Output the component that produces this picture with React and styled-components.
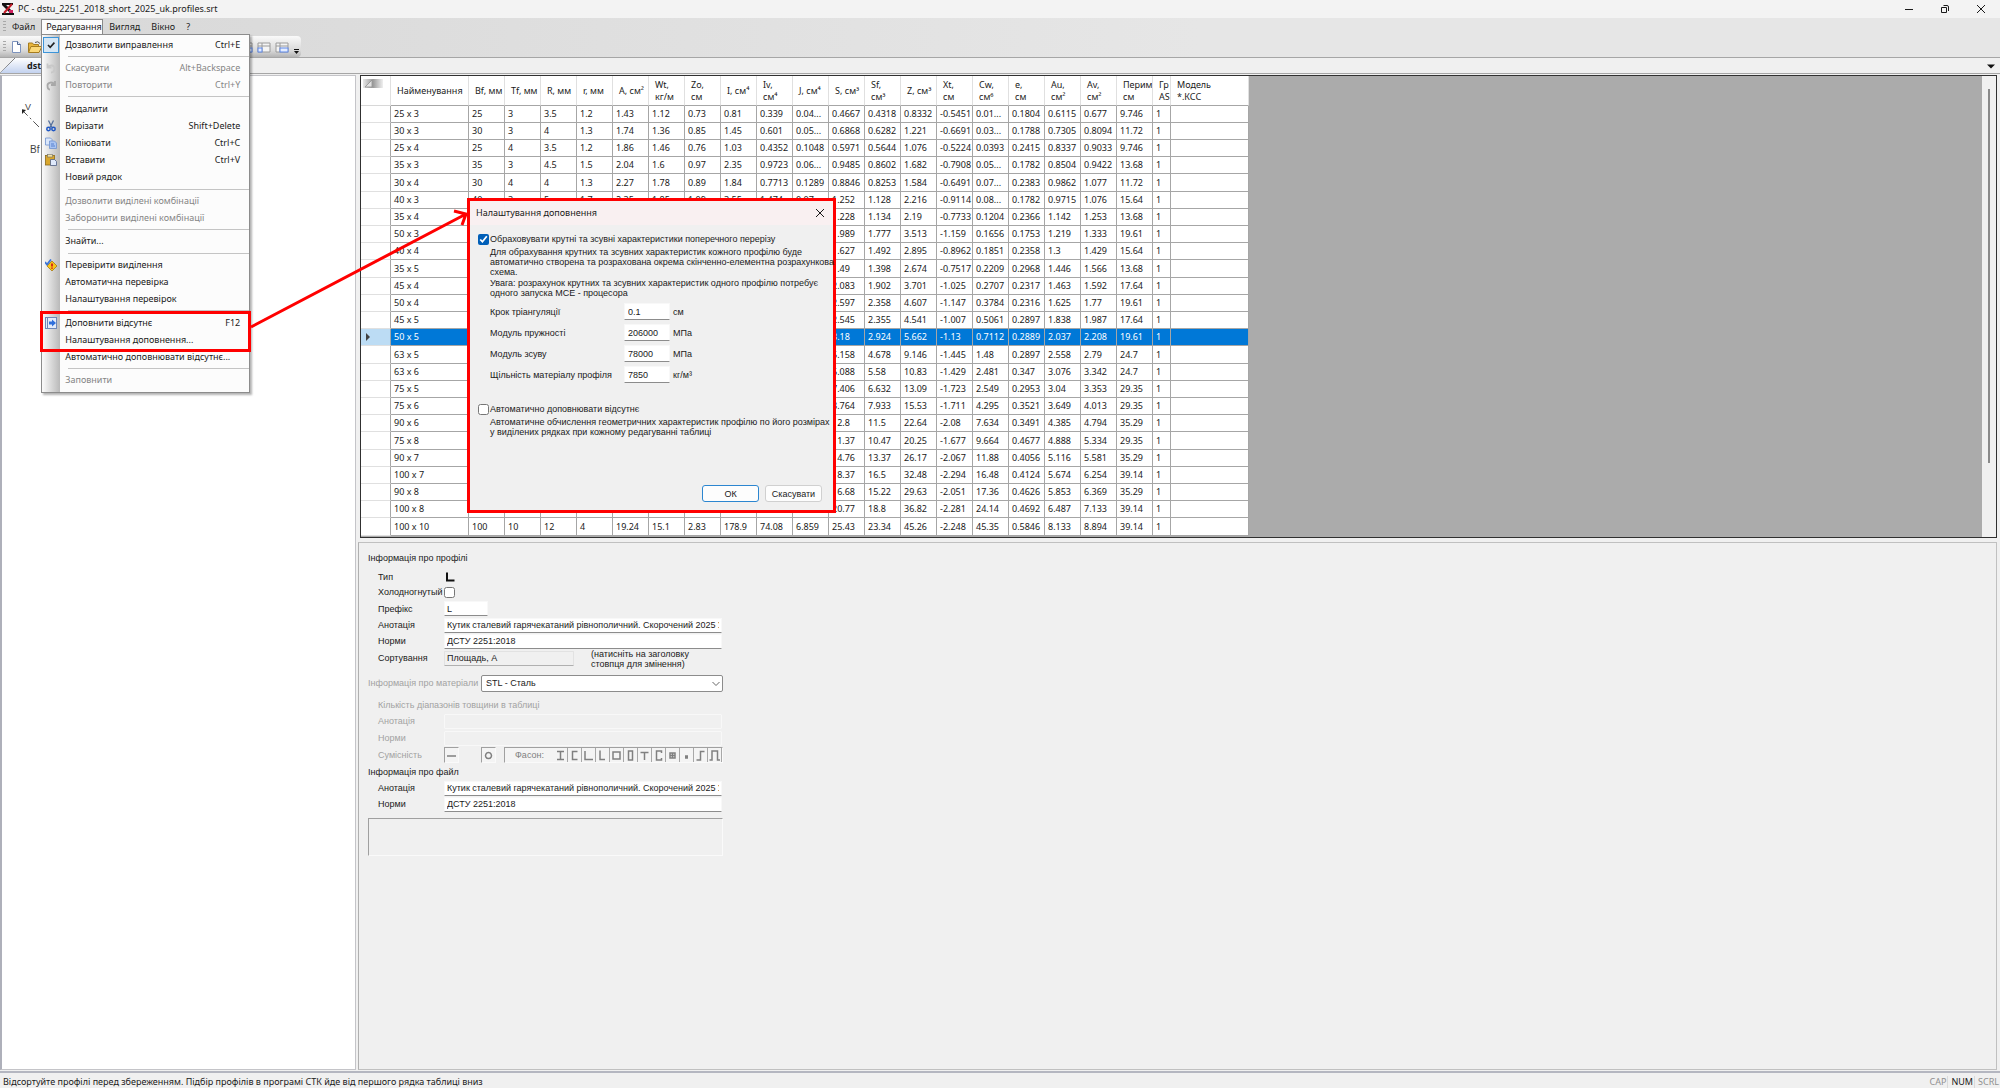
import React from 'react';
import styled, { createGlobalStyle, css } from 'styled-components';

const Global = createGlobalStyle`
  *, *::before, *::after { box-sizing: border-box; }
  body { margin: 0; background: #f0f0f0; }
  body, table {
    font-family: "Noto Sans", "Open Sans", sans-serif;
    font-size: 9px;
    line-height: 12px;
    color: #1a1a1a;
  }
  button, input, select {
    font: inherit;
    color: #1a1a1a;
  }
`;

const Window = styled.div`
  position: relative;
  display: flex;
  flex-direction: column;
  min-height: 100vh;
  background: #f0f0f0;
`;

/* ---------- title bar ---------- */
const TitleBar = styled.header`
  display: flex;
  align-items: center;
  height: 18px;
  padding: 0 14px 0 2px;
  gap: 4px;
  background: #f3f3f3;
`;
const Title = styled.h1`
  flex: 1;
  margin: 0;
  font-size: 9px;
  font-weight: 400;
`;
const WindowButtons = styled.div`
  display: flex;
  gap: 26px;
`;
const GlyphButton = styled.button`
  display: flex;
  width: 10px;
  height: 10px;
  padding: 0;
  border: 0;
  background: none;
`;

/* ---------- menu bar ---------- */
const MenuBar = styled.nav`
  display: flex;
  align-items: center;
  height: 18px;
  padding-left: 3px;
  gap: 1px;
  background: linear-gradient(90deg, #d8d8d8, #e6e6e6 60%);
`;
const Grip = styled.span`
  width: 3px;
  height: 12px;
  background: repeating-linear-gradient(#a8a8a8 0 1px, transparent 1px 3px);
`;
const MenuSlot = styled.div`
  position: relative;
`;
const MenuTitle = styled.button`
  height: 16px;
  padding: 0 4px;
  white-space: nowrap;
  border: 1px solid transparent;
  background: none;
  ${(p) => p.$open && css`
    width: 62px;
    border-color: #8a8a8a;
    border-bottom-color: #fcfcfc;
    background: #fcfcfc;
  `}
`;
const Menu = styled.ul`
  position: absolute;
  z-index: 5;
  top: 15px;
  left: 0;
  width: 209px;
  margin: 0;
  padding: 1px 0 3px 1px;
  list-style: none;
  border: 1px solid #8c8c8c;
  background: linear-gradient(90deg, #f8f8f8 1px, #b9b9b9 18px, #fcfcfc 18px);
  box-shadow: 2px 2px 2px rgba(0, 0, 0, 0.3);
`;
const MenuRow = styled.li`
  height: 17px;
  &:nth-child(5n) { height: 18px; }
`;
const MenuItem = styled.button`
  display: grid;
  grid-template-columns: 17px 1fr auto;
  align-items: center;
  width: 100%;
  height: 100%;
  padding: 0 9px 0 0;
  border: 0;
  background: none;
  text-align: left;
  white-space: nowrap;
  &:disabled { color: #858585; }
`;
const MenuIcon = styled.span`
  display: flex;
  align-items: center;
  justify-content: center;
  width: 16px;
  height: 16px;
  ${(p) => p.$on && css`
    border: 1px solid #3c94d8;
    background: #d5e6f4;
  `}
`;
const MenuText = styled.span`
  padding-left: 5px;
`;
const MenuLine = styled.li`
  height: 6px;
  padding-top: 3px;
  &:nth-child(5n) { height: 7px; }
  &::before {
    content: "";
    display: block;
    height: 1px;
    margin-left: 25px;
    background: #c4c4c4;
  }
`;

/* ---------- tool bar ---------- */
const ToolBand = styled.div`
  height: 21px;
  background: linear-gradient(90deg, #d8d8d8, #e6e6e6 60%);
`;
const ToolBar = styled.div`
  display: flex;
  align-items: center;
  width: 301px;
  height: 21px;
  padding-left: 3px;
  gap: 4px;
  border-radius: 0 4px 4px 0;
  background: linear-gradient(#fafafa, #d8d8d8 70%, #b4b4b4);
`;
const ToolButton = styled.button`
  display: flex;
  width: ${(p) => (p.$thin ? 8 : 14)}px;
  height: 14px;
  padding: 0;
  border: 0;
  background: none;
`;
const ToolSpace = styled.span`
  flex: 1;
`;

/* ---------- document tabs ---------- */
const TabStrip = styled.div`
  display: flex;
  align-items: center;
  justify-content: space-between;
  height: 17px;
  padding-right: 4px;
  border-top: 1px solid #a6a6a6;
  border-bottom: 1px solid #a6a6a6;
`;
const Tab = styled.button`
  width: 130px;
  height: 15px;
  padding: 0 0 0 27px;
  border: 0;
  text-align: left;
  font-weight: 700;
  background: linear-gradient(to bottom right, transparent 49%, #808080 50%, transparent 51%) 0 0 / 15px 15px no-repeat,
    linear-gradient(#ffffff, #c3d2ef);
  clip-path: polygon(14px 0, 100% 0, 100% 100%, 0 100%);
`;

/* ---------- body ---------- */
const Workspace = styled.main`
  flex: 1;
  display: flex;
  gap: 2px;
  padding: 1px 3px 1px 0;
  border-bottom: 2px solid #b4b6c0;
`;
const Preview = styled.section`
  width: 356px;
  padding: 26px 0 0 20px;
  border: 1px solid #c4c4c8;
  border-left: 2px solid #aeb0ba;
  background: #fff;
`;
const RightSide = styled.div`
  flex: 1;
  display: flex;
  flex-direction: column;
  min-width: 0;
  gap: 4px;
`;
const GridPane = styled.section`
  display: flex;
  height: 463px;
  margin-left: 2px;
  overflow: hidden;
  border: 1px solid #303030;
  background: #ababab;
`;
const GridArea = styled.div`
  flex: 1;
  overflow: hidden;
`;
const Scroller = styled.div`
  display: flex;
  justify-content: center;
  width: 14px;
  padding: 13px 0;
  background: #f0f0f0;
`;
const Thumb = styled.div`
  width: 2px;
  height: 86%;
  background: #8a8a8a;
`;
const Grid = styled.table`
  width: 888px;
  table-layout: fixed;
  border-collapse: separate;
  border-spacing: 0;
  background: #fff;
`;
const Col = styled.col`
  width: ${(p) => p.$w}px;
`;
const Head = styled.th`
  height: 30px;
  padding: 0 0 0 6px;
  overflow: hidden;
  text-align: left;
  font-weight: 400;
  white-space: pre;
  border-right: 1px solid #e0e0e0;
  border-bottom: 1px solid #a6a6a6;
`;
const Corner = styled.th`
  padding: 3px 0 0 2px;
  vertical-align: top;
  text-align: left;
  line-height: 0;
  border-right: 1px solid #e0e0e0;
  border-bottom: 1px solid #d8d8d8;
`;
const Row = styled.tr`
  height: 17px;
  &:nth-child(5n) { height: 18px; }
  ${(p) => p.$active && css`
    td { color: #fff; background: #0078d7; }
    th { background: #bcdcf4; }
  `}
`;
const RowHead = styled.th`
  padding: 0 0 0 4px;
  text-align: left;
  line-height: 0;
  border-right: 1px solid #a6a6a6;
  border-bottom: 1px solid #e0e0e0;
`;
const Cell = styled.td`
  padding: 0 0 0 3px;
  overflow: hidden;
  white-space: nowrap;
  border-right: 1px solid #a6a6a6;
  border-bottom: 1px solid #a6a6a6;
`;

/* ---------- form ---------- */
const FormPane = styled.section`
  flex: 1;
  padding: 9px 0 0 9px;
  border: 1px solid #c0c0c0;
  border-left-color: #b0b0b0;
  font-family: "Liberation Sans", Arial, sans-serif;
`;
const Form = styled.form`
  width: 355px;
`;
const Heading = styled.h2`
  margin: 0;
  height: ${(p) => (p.$first ? 18 : 14)}px;
  font-size: 9px;
  font-weight: 400;
`;
const Line = styled.div`
  display: flex;
  align-items: center;
  height: ${(p) => p.$h || 16}px;
  padding-left: ${(p) => (p.$flush ? 0 : 10)}px;
  white-space: nowrap;
  color: ${(p) => (p.$off ? '#a2a2a2' : '#1a1a1a')};
`;
const Name = styled.label`
  width: ${(p) => p.$w || 66}px;
`;
const Box = styled.input`
  width: ${(p) => p.$w || 278}px;
  height: 15px;
  padding: 0 2px;
  border: 1px solid #f8f8f8;
  border-bottom-color: #8c8c8c;
  border-radius: 1px;
  background: #fff;
  &:disabled { border-color: #f8f8f8; background: #f0f0f0; }
  &:read-only:enabled { border-color: #e2e2e2; border-bottom-color: #b0b0b0; background: #f0f0f0; }
`;
const Tick = styled.input`
  width: 11px;
  height: 11px;
  margin: 0;
  accent-color: #005fb8;
`;
const Hint = styled.span`
  padding: 2px 0 0 17px;
  white-space: pre;
  line-height: 10px;
`;
const PickWrap = styled.span`
  position: relative;
  flex: 1;
  height: 17px;
  svg { position: absolute; right: 3px; top: 6px; }
`;
const Pick = styled.select`
  width: 100%;
  height: 17px;
  padding: 0 4px;
  appearance: none;
  border: 1px solid #8c8c8c;
  border-radius: 2px;
  background: #fff;
`;
const ShapeBar = styled.div`
  display: flex;
  height: 16px;
  margin-left: ${(p) => p.$gap || 0}px;
  border: 1px solid #fafafa;
  border-top-color: #a0a0a0;
  border-left-color: #a0a0a0;
`;
const ShapeButton = styled.button`
  display: flex;
  align-items: center;
  justify-content: center;
  width: ${(p) => p.$w || 14}px;
  height: 14px;
  padding: 0;
  color: #808080;
  border: 0;
  border-right: ${(p) => (p.$w ? 0 : 1)}px solid #a8a8a8;
  background: #f4f4f4;
`;
const Notes = styled.div`
  height: 38px;
  margin-top: 6px;
  border: 1px solid #fafafa;
  border-top-color: #a0a0a0;
  border-left-color: #a0a0a0;
`;

/* ---------- status bar ---------- */
const StatusBar = styled.footer`
  display: flex;
  align-items: center;
  justify-content: space-between;
  height: 15px;
  padding: 2px 1px 0 3px;
`;
const Locks = styled.div`
  display: flex;
`;
const Lock = styled.span`
  padding: 0 1px 0 3px;
  color: ${(p) => (p.$on ? '#1a1a1a' : '#8f8f8f')};
  border-right: 1px solid #dadada;
  &:last-child { padding-right: 0; border-right: 0; }
`;

/* ---------- dialog and call-outs ---------- */
const Dialog = styled.section`
  position: absolute;
  z-index: 6;
  top: 198px;
  left: 467px;
  width: 369px;
  height: 315px;
  display: flex;
  flex-direction: column;
  border: 3px solid #ff0000;
  background: #f0f0f0;
`;
const DialogTitle = styled.div`
  display: flex;
  align-items: center;
  justify-content: space-between;
  height: 24px;
  padding: 0 8px 0 6px;
  background: #f9f0f1;
`;
const DialogBody = styled.div`
  flex: 1;
  display: flex;
  flex-direction: column;
  padding: 7px 11px 8px 8px;
  font-family: "Liberation Sans", Arial, sans-serif;
`;
const TickLine = styled.label`
  display: flex;
  align-items: center;
  gap: 1px;
  height: 14px;
  margin-top: ${(p) => p.$gap || 0}px;
  white-space: nowrap;
`;
const Note = styled.p`
  margin: 0;
  padding: 1px 0 0 12px;
  line-height: 10px;
  white-space: pre;
`;
const Fields = styled.div`
  display: grid;
  grid-template-columns: 134px 46px auto;
  grid-auto-rows: 17px;
  row-gap: 4px;
  column-gap: 0;
  align-items: center;
  padding: 5px 0 0 12px;
`;
const Value = styled.input`
  height: 17px;
  padding: 0 3px;
  border: 1px solid #f8f8f8;
  border-bottom-color: #8c8c8c;
  border-radius: 1px;
  background: #fff;
`;
const Unit = styled.span`
  padding-left: 3px;
`;
const Actions = styled.div`
  display: flex;
  justify-content: flex-end;
  gap: 6px;
  margin-top: auto;
`;
const Action = styled.button`
  width: 57px;
  height: 17px;
  padding: 0;
  border: 1px solid ${(p) => (p.$main ? '#2c86d0' : '#d0d0d0')};
  border-radius: 3px;
  background: #fdfdfd;
`;
const Highlight = styled.div`
  position: absolute;
  z-index: 7;
  top: 311px;
  left: 40px;
  width: 211px;
  height: 41px;
  border: 3px solid #ff0000;
`;
const Arrow = styled.svg`
  position: absolute;
  z-index: 7;
  top: 205px;
  left: 248px;
`;

/* ---------- data ---------- */
const heads = ['Найменування', 'Bf, мм', 'Tf, мм', 'R, мм', 'r, мм', 'A, см²', 'Wt,\nкг/м', 'Zo,\nсм', 'I, см⁴', 'Iv,\nсм⁴', 'J, см⁴', 'S, см³', 'Sf,\nсм³', 'Z, см³', 'Xt,\nсм', 'Cw,\nсм⁶', 'e,\nсм', 'Au,\nсм²', 'Av,\nсм²', 'Перим\nсм', 'Гр\nAS', 'Модель\n*.КСС'];
const widths = [30, 78, ...Array(19).fill(36), 18, 78];

const rows = `25 x 3|25|3|3.5|1.2|1.43|1.12|0.73|0.81|0.339|0.04...|0.4667|0.4318|0.8332|-0.5451|0.01...|0.1804|0.6115|0.677|9.746
30 x 3|30|3|4|1.3|1.74|1.36|0.85|1.45|0.601|0.05...|0.6868|0.6282|1.221|-0.6691|0.03...|0.1788|0.7305|0.8094|11.72
25 x 4|25|4|3.5|1.2|1.86|1.46|0.76|1.03|0.4352|0.1048|0.5971|0.5644|1.076|-0.5224|0.0393|0.2415|0.8337|0.9033|9.746
35 x 3|35|3|4.5|1.5|2.04|1.6|0.97|2.35|0.9723|0.06...|0.9485|0.8602|1.682|-0.7908|0.05...|0.1782|0.8504|0.9422|13.68
30 x 4|30|4|4|1.3|2.27|1.78|0.89|1.84|0.7713|0.1289|0.8846|0.8253|1.584|-0.6491|0.07...|0.2383|0.9862|1.077|11.72
40 x 3|40|3|5|1.7|2.35|1.85|1.09|3.55|1.474|0.07...|1.252|1.128|2.216|-0.9114|0.08...|0.1782|0.9715|1.076|15.64
35 x 4|||||||||||1.228|1.134|2.19|-0.7733|0.1204|0.2366|1.142|1.253|13.68
50 x 3|||||||||||1.989|1.777|3.513|-1.159|0.1656|0.1753|1.219|1.333|19.61
40 x 4|||||||||||1.627|1.492|2.895|-0.8962|0.1851|0.2358|1.3|1.429|15.64
35 x 5|||||||||||1.49|1.398|2.674|-0.7517|0.2209|0.2968|1.446|1.566|13.68
45 x 4|||||||||||2.083|1.902|3.701|-1.025|0.2707|0.2317|1.463|1.592|17.64
50 x 4|||||||||||2.597|2.358|4.607|-1.147|0.3784|0.2316|1.625|1.77|19.61
45 x 5|||||||||||2.545|2.355|4.541|-1.007|0.5061|0.2897|1.838|1.987|17.64
50 x 5|||||||||||3.18|2.924|5.662|-1.13|0.7112|0.2889|2.037|2.208|19.61
63 x 5|||||||||||5.158|4.678|9.146|-1.445|1.48|0.2897|2.558|2.79|24.7
63 x 6|||||||||||6.088|5.58|10.83|-1.429|2.481|0.347|3.076|3.342|24.7
75 x 5|||||||||||7.406|6.632|13.09|-1.723|2.549|0.2953|3.04|3.353|29.35
75 x 6|||||||||||8.764|7.933|15.53|-1.711|4.295|0.3521|3.649|4.013|29.35
90 x 6|||||||||||12.8|11.5|22.64|-2.08|7.634|0.3491|4.385|4.794|35.29
75 x 8|||||||||||11.37|10.47|20.25|-1.677|9.664|0.4677|4.888|5.334|29.35
90 x 7|||||||||||14.76|13.37|26.17|-2.067|11.88|0.4056|5.116|5.581|35.29
100 x 7|||||||||||18.37|16.5|32.48|-2.294|16.48|0.4124|5.674|6.254|39.14
90 x 8|||||||||||16.68|15.22|29.63|-2.051|17.36|0.4626|5.853|6.369|35.29
100 x 8|||||||||||20.77|18.8|36.82|-2.281|24.14|0.4692|6.487|7.133|39.14
100 x 10|100|10|12|4|19.24|15.1|2.83|178.9|74.08|6.859|25.43|23.34|45.26|-2.248|45.35|0.5846|8.133|8.894|39.14`
  .split('\n')
  .map((line) => [...line.split('|'), '1', '']);

const menuItems = [
  { text: 'Дозволити виправлення', keys: 'Ctrl+E', icon: 'check', on: true },
  null,
  { text: 'Скасувати', keys: 'Alt+Backspace', icon: 'undo', off: true },
  { text: 'Повторити', keys: 'Ctrl+Y', icon: 'redo', off: true },
  null,
  { text: 'Видалити' },
  { text: 'Вирізати', keys: 'Shift+Delete', icon: 'cut' },
  { text: 'Копіювати', keys: 'Ctrl+C', icon: 'copy' },
  { text: 'Вставити', keys: 'Ctrl+V', icon: 'paste' },
  { text: 'Новий рядок' },
  null,
  { text: 'Дозволити виділені комбінації', off: true },
  { text: 'Заборонити виділені комбінації', off: true },
  null,
  { text: 'Знайти...' },
  null,
  { text: 'Перевірити виділення', icon: 'verify' },
  { text: 'Автоматична перевірка' },
  { text: 'Налаштування перевірок' },
  null,
  { text: 'Доповнити відсутнє', keys: 'F12', icon: 'fill' },
  { text: 'Налаштування доповнення...' },
  { text: 'Автоматично доповнювати відсутнє...' },
  null,
  { text: 'Заповнити', off: true },
];

const iconArt = {
  check: <path d="M3 6l2.2 2.4L9.4 3.6" fill="none" stroke="#222" strokeWidth="1.6" />,
  undo: <path d="M2.5 1.5v4h4M3 5C5 2.5 9.5 3 9.5 6.5S7.5 10.5 6 10.5" fill="none" stroke="#c8c8c8" strokeWidth="1.8" />,
  redo: <path d="M10 2v4H6M9.5 5.5C7.5 2.5 2.5 3 2.5 6.5S4 10.5 5 10.5" fill="none" stroke="#a8a8a8" strokeWidth="1.8" />,
  cut: (
    <g fill="none">
      <path d="M3.5 0.5L7 7.5M8.5 0.5L5 7.5" stroke="#55709c" strokeWidth="1.3" />
      <circle cx="3.5" cy="9" r="1.7" stroke="#1f57c4" strokeWidth="1.5" />
      <circle cx="8.5" cy="9" r="1.7" stroke="#1f57c4" strokeWidth="1.5" />
    </g>
  ),
  copy: (
    <g stroke="#6f92cf" strokeWidth="0.8">
      <path d="M0.5 1h5l1.5 1.5V8H0.5z" fill="#dbe7fa" />
      <path d="M4.5 4h5l2 2v5.5h-7z" fill="#a9c4f2" />
      <path d="M6 7h3M6 9h4" stroke="#3f6fc8" />
    </g>
  ),
  paste: (
    <g>
      <rect x="0.5" y="1.5" width="9" height="9.5" fill="#d9a62c" stroke="#8a6a1c" strokeWidth="0.8" />
      <rect x="2.5" y="0.5" width="5" height="2.5" fill="#f4e3a1" stroke="#6d6d6d" strokeWidth="0.6" />
      <path d="M5.5 5.5h4l2 2v4h-6z" fill="#dfe9fb" stroke="#4f5f86" strokeWidth="0.8" />
    </g>
  ),
  verify: (
    <g>
      <path d="M7 2l5 5-5 5-5-5z" fill="#f7c51c" stroke="#a77a10" strokeWidth="0.8" />
      <path d="M7 4.5v3M7 8.5v1.2" stroke="#d01616" strokeWidth="1.7" />
      <path d="M0 3l2 2.5L6 0.5" fill="none" stroke="#3b74d6" strokeWidth="1.8" />
    </g>
  ),
  fill: (
    <g>
      <rect x="0.5" y="0.5" width="11" height="11" fill="#e3ecfa" stroke="#6d87b8" />
      <path d="M2.5 1v10" stroke="#6d87b8" />
      <path d="M4 4.5h3v-2l4 3.5-4 3.5v-2H4z" fill="#2f6fdb" />
    </g>
  ),
};

const shapes = [
  'M2 1.5h7M2 9.5h7M5.5 1.5v8',
  'M8.5 1.5H3.5v8h5',
  'M2 1v8.5h8',
  'M3 0.5v9h5',
  'M2 2h7v7H2z',
  'M3.5 1h4v9h-4z',
  'M1.5 2.5h8M5.5 2.5v7.5',
  'M8.5 3V1H3.5v9h5V8',
  'M3 3h5v5H3zM3 5.5h5M5.5 3v5',
  'M4 6h3M4 7h3M4 8h3',
  'M1.5 10h4V1.5h4',
  'M0.5 10h2.5V1h5.5v9h2.5',
];

const Art = ({ d, size = 11, width = 1.5 }) => (
  <svg width={size} height={size} viewBox={`0 0 ${size} ${size}`} aria-hidden="true">
    <path d={d} fill="none" stroke="currentColor" strokeWidth={width} />
  </svg>
);

const TableGlyph = ({ x, w }) => (
  <svg width="14" height="14" viewBox="0 0 14 14" aria-hidden="true">
    <path d="M1 3h12v9H1zM1 6h12M5 3v9" fill="#f4f4f4" stroke="#9a9a9a" />
    <rect x={x} y="8" width={w} height="4" fill="#e4edff" stroke="#5c86e6" />
  </svg>
);

const fields = [
  ['step', 'Крок тріангуляції', '0.1', 'см'],
  ['young', 'Модуль пружності', '206000', 'МПа'],
  ['shear', 'Модуль зсуву', '78000', 'МПа'],
  ['density', 'Щільність матеріалу профіля', '7850', 'кг/м³'],
];

const annotation = 'Кутик сталевий гарячекатаний рівнополичний. Скорочений 2025 Україна';

function EditMenu() {
  return (
    <Menu>
      {menuItems.map((item, i) =>
        item ? (
          <MenuRow key={i}>
            <MenuItem type="button" disabled={item.off}>
              <MenuIcon $on={item.on}>
                {item.icon && <svg width="12" height="12" viewBox="0 0 12 12" aria-hidden="true">{iconArt[item.icon]}</svg>}
              </MenuIcon>
              <MenuText>{item.text}</MenuText>
              <span>{item.keys}</span>
            </MenuItem>
          </MenuRow>
        ) : (
          <MenuLine key={i} />
        )
      )}
    </Menu>
  );
}

function ProfileGrid() {
  return (
    <GridPane>
      <GridArea>
        <Grid>
          <colgroup>
            {widths.map((w, i) => <Col key={i} $w={w} />)}
          </colgroup>
          <thead>
            <tr>
              <Corner>
                <svg width="20" height="10" viewBox="0 0 20 10" aria-hidden="true">
                  <defs>
                    <linearGradient id="corner">
                      <stop offset="0" stopColor="#e8e8e8" />
                      <stop offset="0.5" stopColor="#9a9a9a" />
                      <stop offset="1" stopColor="#f0f0f0" />
                    </linearGradient>
                  </defs>
                  <rect width="20" height="9" fill="url(#corner)" />
                  <path d="M2 8L9 1v7z" fill="#e0e0e0" stroke="#909090" strokeWidth="0.8" />
                </svg>
              </Corner>
              {heads.map((h) => <Head key={h}>{h}</Head>)}
            </tr>
          </thead>
          <tbody>
            {rows.map((cells) => {
              const active = cells[0] === '50 x 5';
              return (
                <Row key={cells[0]} $active={active}>
                  <RowHead>
                    {active && <svg width="5" height="8" viewBox="0 0 5 8" aria-hidden="true"><path d="M1 0l4 4-4 4z" fill="#404040" /></svg>}
                  </RowHead>
                  {cells.map((c, i) => <Cell key={i}>{c}</Cell>)}
                </Row>
              );
            })}
          </tbody>
        </Grid>
      </GridArea>
      <Scroller><Thumb /></Scroller>
    </GridPane>
  );
}

function ProfileForm() {
  return (
    <FormPane>
      <Form>
        <Heading $first>Інформація про профілі</Heading>
        <Line $h={14}>
          <Name as="span">Тип</Name>
          <svg width="11" height="11" viewBox="0 0 11 11" aria-hidden="true"><path d="M3 0.5v8h7.5" fill="none" stroke="#111" strokeWidth="2" /></svg>
        </Line>
        <Line>
          <Name htmlFor="cold">Холодногнутый</Name>
          <Tick id="cold" type="checkbox" />
        </Line>
        <Line $h={17}>
          <Name htmlFor="prefix">Префікс</Name>
          <Box id="prefix" $w={44} defaultValue="L" />
        </Line>
        <Line>
          <Name htmlFor="note">Анотація</Name>
          <Box id="note" defaultValue={annotation} />
        </Line>
        <Line>
          <Name htmlFor="norm">Норми</Name>
          <Box id="norm" defaultValue="ДСТУ 2251:2018" />
        </Line>
        <Line $h={18}>
          <Name htmlFor="sort">Сортування</Name>
          <Box id="sort" $w={130} readOnly value="Площадь, A" />
          <Hint>{'(натисніть на заголовку\nстовпця для змінення)'}</Hint>
        </Line>
        <Line $h={32} $flush $off>
          <Name htmlFor="material" $w={113}>Інформація про матеріали</Name>
          <PickWrap>
            <Pick id="material" defaultValue="stl">
              <option value="stl">STL - Сталь</option>
            </Pick>
            <svg width="8" height="6" viewBox="0 0 8 6" aria-hidden="true"><path d="M0.5 1L4 4.500L7.500 1" fill="none" stroke="#666" /></svg>
          </PickWrap>
        </Line>
        <Line $h={11} $off>Кількість діапазонів товщини в таблиці</Line>
        <Line $h={22} $off>
          <Name htmlFor="matnote">Анотація</Name>
          <Box id="matnote" disabled />
        </Line>
        <Line $h={12} $off>
          <Name htmlFor="matnorm">Норми</Name>
          <Box id="matnorm" disabled />
        </Line>
        <Line $h={22} $off>
          <Name as="span">Сумісність</Name>
          <ShapeBar><ShapeButton type="button" $w={13} aria-label="Лист"><Art d="M1 6h9" /></ShapeButton></ShapeBar>
          <ShapeBar $gap={22}><ShapeButton type="button" $w={13} aria-label="Труба"><Art d="M5.5 2.5a3 3 0 1 0 0.01 0z" /></ShapeButton></ShapeBar>
          <ShapeBar $gap={8}>
            <ShapeButton type="button" $w={49}>Фасон:</ShapeButton>
            {shapes.map((d, i) => <ShapeButton key={i} type="button" aria-label={`Фасон ${i + 1}`}><Art d={d} /></ShapeButton>)}
          </ShapeBar>
        </Line>
        <Heading>Інформація про файл</Heading>
        <Line>
          <Name htmlFor="filenote">Анотація</Name>
          <Box id="filenote" defaultValue={annotation} />
        </Line>
        <Line>
          <Name htmlFor="filenorm">Норми</Name>
          <Box id="filenorm" defaultValue="ДСТУ 2251:2018" />
        </Line>
        <Notes />
      </Form>
    </FormPane>
  );
}

function FillDialog() {
  return (
    <Dialog role="dialog" aria-label="Налаштування доповнення">
      <DialogTitle>
        <span>Налаштування доповнення</span>
        <GlyphButton type="button" aria-label="Закрити"><Art d="M1 1l8 8M9 1l-8 8" size={10} width={1} /></GlyphButton>
      </DialogTitle>
      <DialogBody>
        <TickLine>
          <Tick type="checkbox" defaultChecked />
          Обраховувати крутні та зсувні характеристики поперечного перерізу
        </TickLine>
        <Note>{'Для обрахування крутних та зсувних характеристик кожного профілю буде\nавтоматично створена та розрахована окрема скінченно-елементна розрахункова\nсхема.'}</Note>
        <Note>{'Увага: розрахунок крутних та зсувних характеристик одного профілю потребує\nодного запуска МСЕ - процесора'}</Note>
        <Fields>
          {fields.map(([id, label, value, unit]) => (
            <React.Fragment key={id}>
              <label htmlFor={id}>{label}</label>
              <Value id={id} defaultValue={value} />
              <Unit>{unit}</Unit>
            </React.Fragment>
          ))}
        </Fields>
        <TickLine $gap={19}>
          <Tick type="checkbox" />
          Автоматично доповнювати відсутнє
        </TickLine>
        <Note>{'Автоматичне обчислення геометричних характеристик профілю по його розмірах\nу виділених рядках при кожному редагуванні таблиці'}</Note>
        <Actions>
          <Action type="button" $main>ОК</Action>
          <Action type="button">Скасувати</Action>
        </Actions>
      </DialogBody>
    </Dialog>
  );
}

export default function App() {
  return (
    <Window>
      <Global />
      <TitleBar>
        <svg width="12" height="12" viewBox="0 0 12 12" aria-hidden="true">
          <path d="M0 1h11M0 11h12" stroke="#111" strokeWidth="1.8" />
          <path d="M1 1l9 9" stroke="#111" strokeWidth="3" />
          <path d="M10 1L2 10" stroke="#c01c28" strokeWidth="2" />
          <path d="M7 7h4v3H7z" fill="#d02060" />
        </svg>
        <Title>PC - dstu_2251_2018_short_2025_uk.profiles.srt</Title>
        <WindowButtons>
          <GlyphButton type="button" aria-label="Згорнути"><Art d="M1 5.5h8" size={10} width={1} /></GlyphButton>
          <GlyphButton type="button" aria-label="Відновити"><Art d="M1.5 3.5h5v5h-5zM3.5 1.5h3.5q1.5 0 1.5 1.5v4" size={10} width={1} /></GlyphButton>
          <GlyphButton type="button" aria-label="Закрити"><Art d="M1 1l8 8M9 1l-8 8" size={10} width={1} /></GlyphButton>
        </WindowButtons>
      </TitleBar>

      <MenuBar>
        <Grip />
        <MenuTitle type="button">Файл</MenuTitle>
        <MenuSlot>
          <MenuTitle type="button" $open>Редагування</MenuTitle>
          <EditMenu />
        </MenuSlot>
        <MenuTitle type="button">Вигляд</MenuTitle>
        <MenuTitle type="button">Вікно</MenuTitle>
        <MenuTitle type="button">?</MenuTitle>
      </MenuBar>

      <ToolBand>
        <ToolBar>
          <Grip />
          <ToolButton type="button" aria-label="Новий">
            <svg width="14" height="14" viewBox="0 0 14 14" aria-hidden="true">
              <path d="M2.5 1.5h5l3 3v8h-8z" fill="#fff" stroke="#7d93bd" />
              <path d="M7.5 1.5v3h3" fill="#dce6f7" stroke="#4b6392" />
            </svg>
          </ToolButton>
          <ToolButton type="button" aria-label="Відкрити">
            <svg width="14" height="14" viewBox="0 0 14 14" aria-hidden="true">
              <path d="M0.5 12V3h4l1 1.5h5V6" fill="#e8b53c" stroke="#a67c1e" />
              <path d="M0.5 12.5L3 6.5h11l-3 6z" fill="#fbd878" stroke="#a67c1e" />
              <path d="M7 2.5q3-2 5 1" fill="none" stroke="#555" />
            </svg>
          </ToolButton>
          <ToolSpace />
          <ToolButton type="button" aria-label="Вставити стовпець"><TableGlyph x={9} w={4} /></ToolButton>
          <ToolButton type="button" aria-label="Додати рядок"><TableGlyph x={1} w={4} /></ToolButton>
          <ToolButton type="button" aria-label="Додати стовпець"><TableGlyph x={5} w={8} /></ToolButton>
          <ToolButton type="button" $thin aria-label="Параметри панелі">
            <svg width="8" height="14" viewBox="0 0 8 14" aria-hidden="true"><path d="M1 9.5h5" stroke="#111" /><path d="M1 11h5l-2.5 3z" fill="#111" /></svg>
          </ToolButton>
        </ToolBar>
      </ToolBand>

      <TabStrip>
        <Tab type="button">dst</Tab>
        <GlyphButton type="button" aria-label="Список вікон">
          <svg width="10" height="10" viewBox="0 0 10 10" aria-hidden="true"><path d="M1 3.5h8l-4 4z" fill="#111" /></svg>
        </GlyphButton>
      </TabStrip>

      <Workspace>
        <Preview>
          <svg width="60" height="60" viewBox="0 0 60 60" fontSize="9" fontFamily="Liberation Sans, sans-serif" fill="#444" aria-label="Переріз кутика">
            <path d="M0 8L22 30" stroke="#555" strokeDasharray="8 3 2 3" />
            <path d="M-1 7l5 1-4 4z" fill="#222" />
            <text x="3" y="8">V</text>
            <text x="8" y="51" fontSize="10">Bf</text>
          </svg>
        </Preview>
        <RightSide>
          <ProfileGrid />
          <ProfileForm />
        </RightSide>
      </Workspace>

      <StatusBar>
        <span>Відсортуйте профілі перед збереженням. Підбір профілів в програмі СТК йде від першого рядка таблиці вниз</span>
        <Locks>
          <Lock>CAP</Lock>
          <Lock $on>NUM</Lock>
          <Lock>SCRL</Lock>
        </Locks>
      </StatusBar>

      <Highlight />
      <Arrow width="222" height="126" viewBox="0 0 222 126" fill="none" stroke="#ff0000" strokeWidth="3" aria-hidden="true">
        <path d="M3 122L218 9M206 6l12 3-4 11" />
      </Arrow>
      <FillDialog />
    </Window>
  );
}
